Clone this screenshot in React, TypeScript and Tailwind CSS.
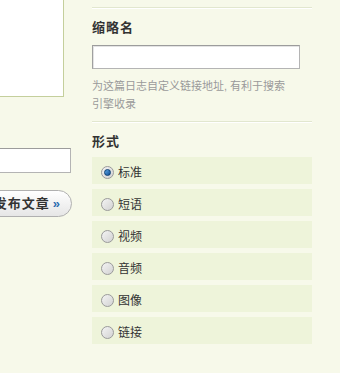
const formats = ["标准", "短语", "视频", "音频", "图像", "链接"];

function Radio({ checked }: { checked?: boolean }) {
  return (
    <span className="relative flex h-[13px] w-[13px] shrink-0 items-center justify-center rounded-full border border-[#9a9a9a] bg-gradient-to-br from-[#f4f4f4] to-[#d2d2d2]">
      {checked && (
        <span className="h-[7px] w-[7px] rounded-full border border-[#0b3f73] bg-gradient-to-br from-[#5fa8e6] to-[#0d4f96]" />
      )}
    </span>
  );
}

export default function App() {
  return (
    <div
      className="flex h-[373px] w-[340px] overflow-hidden bg-[#f7f9ea] text-[#333]"
      style={{ fontFamily: '"Liberation Sans", "Noto Sans CJK SC", sans-serif' }}
    >
      {/* left: editor edge */}
      <div className="flex w-[72px] shrink-0 flex-col items-end overflow-hidden">
        <div className="-mt-[13px] mr-[8px] h-[110px] w-[200px] shrink-0 border border-[#c4cf9c] bg-white" />
        <div className="mt-[51px] mr-[1px] h-[25px] w-[200px] shrink-0 border border-[#b4b4b4] border-t-[#9c9c9c] bg-white" />
        <button className="mt-[17px] flex h-[27px] shrink-0 items-center gap-[3px] whitespace-nowrap rounded-full border border-[#b0b0b0] bg-gradient-to-b from-white to-[#e6e6e6] pl-[12px] pr-[10px] text-[13px] font-bold tracking-[1px] text-[#333]">
          <span>发布文章</span>
          <span className="text-[#2b6cb0]">»</span>
        </button>
      </div>

      {/* right: sidebar */}
      <div className="ml-[20px] flex w-[220px] shrink-0 flex-col pt-[7px]">
        <div className="h-px bg-[#e2e7cf]" />
        <div className="h-px bg-white" />

        <h4 className="mt-[10px] text-[13px] font-bold leading-[18px] tracking-[1px]">缩略名</h4>
        <input
          type="text"
          className="mt-[8px] h-[24px] w-[208px] border border-[#b4b4b4] border-l-[#a0a0a0] border-t-[#9c9c9c] bg-white px-1 outline-none shadow-[inset_1px_1px_0_#e4e4e4]"
        />
        <p className="mt-[8px] w-[200px] text-[11px] leading-[18px] text-[#9a9a9a]">
          为这篇日志自定义链接地址, 有利于搜索引擎收录
        </p>

        <div className="mt-[8px] h-px bg-[#e2e7cf]" />
        <div className="h-px bg-white" />

        <h4 className="mt-[10px] text-[13px] font-bold leading-[18px] tracking-[1px]">形式</h4>
        <ul className="mt-[6px] flex flex-col gap-[5px]">
          {formats.map((f, i) => (
            <li
              key={f}
              className="flex h-[27px] items-center gap-[4px] bg-[#eef4da] pl-[9px] pt-[4px] text-[12px]"
            >
              <Radio checked={i === 0} />
              <span className="leading-[14px]">{f}</span>
            </li>
          ))}
        </ul>
      </div>
    </div>
  );
}
